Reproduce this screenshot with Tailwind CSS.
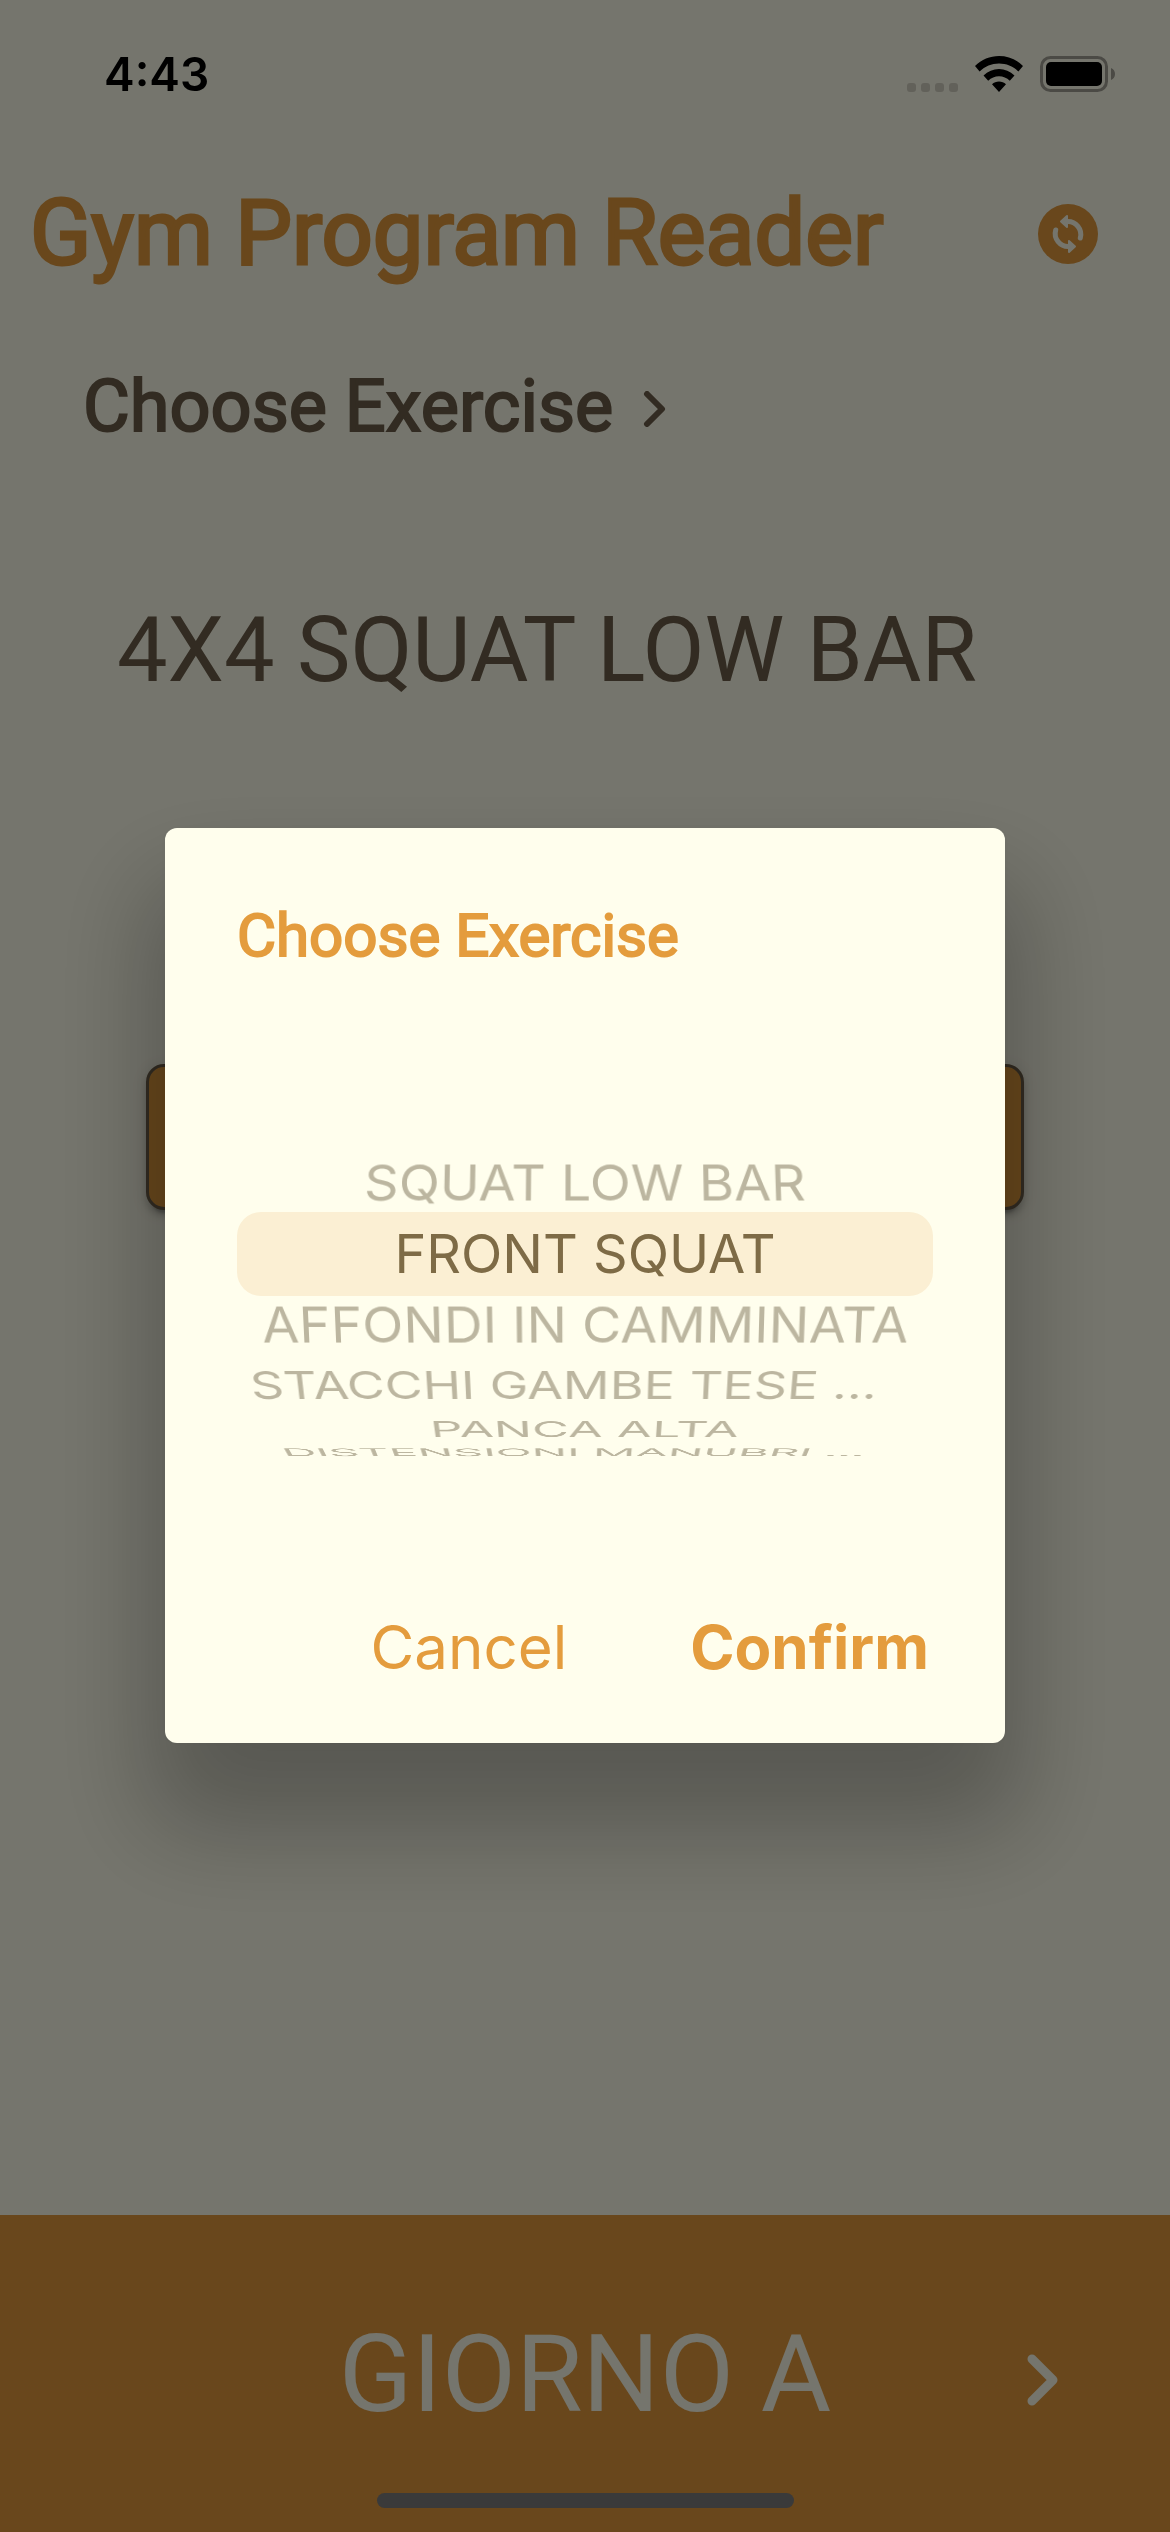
<!DOCTYPE html>
<html lang="en">
<head>
<meta charset="utf-8">
<meta name="viewport" content="width=device-width, initial-scale=1">
<title>Gym Program Reader</title>
<script src="https://cdn.jsdelivr.net/npm/@tailwindcss/browser@4"></script>
</head>
<body class="bg-[#fffeed] font-[Roboto,sans-serif] text-[#6d5f4a]">
<div class="flex min-h-screen flex-col">
  <header class="flex items-center justify-between pt-[174px] pr-[72px] pl-[30px]">
    <h1 class="text-[90px] leading-[120px] text-[#e49c3d] [-webkit-text-stroke:3px_currentColor]">Gym Program Reader</h1>
    <button type="button" aria-label="Refresh program">
      <svg class="size-[60px]" viewBox="0 0 60 60" fill="none">
        <circle cx="30" cy="30" r="30" fill="#e49c3d"/>
        <path d="M29 17.500A13 13 0 0 1 42.300 34M31 42.500A13 13 0 0 1 17.700 26" stroke="#fffeed" stroke-width="5" stroke-linecap="round"/>
        <path d="M29 12v11l-6-5.500zM31 37v11l6-5.500z" fill="#fffeed" stroke="#fffeed" stroke-width="2" stroke-linejoin="round"/>
      </svg>
    </button>
  </header>

  <main class="flex grow flex-col">
    <button type="button" class="mt-[62px] ml-[83px] flex items-center gap-[30px] self-start text-[72px] leading-[102px] [-webkit-text-stroke:2px_currentColor]">
      Choose Exercise
      <svg class="mt-[4px] h-[36px] w-[24px]" viewBox="0 0 24 36" fill="none" stroke="currentColor" stroke-width="6" stroke-linecap="round" stroke-linejoin="round"><path d="M4 3l15 15L4 33"/></svg>
    </button>
    <h2 class="mt-[133px] pr-[76px] text-center text-[90px] leading-[120px]">4X4 SQUAT LOW BAR</h2>
    <button type="button" aria-label="Start exercise" class="mx-[146px] mt-[353px] h-[146px] rounded-[18px] border-[3px] border-[#6d5f4a] bg-[#e49c3d] shadow-[0_9px_3px_-6px_rgb(0_0_0/0.2),0_6px_6px_rgb(0_0_0/0.14),0_3px_15px_rgb(0_0_0/0.12)]"></button>
  </main>

  <footer class="grid h-[317px] grid-cols-[1fr_auto_1fr] items-center bg-[#e49c3d] text-[#fffeed]">
    <h2 class="col-start-2 text-[108px] leading-[126px]">GIORNO A</h2>
    <button type="button" aria-label="Next day" class="mt-[12px] mr-[110px] justify-self-end">
      <svg class="h-[54px] w-[34px]" viewBox="0 0 34 54" fill="none" stroke="currentColor" stroke-width="9" stroke-linecap="round" stroke-linejoin="round"><path d="M6 6l21 21L6 48"/></svg>
    </button>
  </footer>
</div>

<div class="fixed inset-0 flex items-center justify-center bg-black/54 px-[165px] pt-[39px]">
  <section role="dialog" aria-modal="true" aria-labelledby="dialog-title" class="w-full rounded-[12px] bg-[#fffeed] pt-[72px] shadow-[0_69px_100px_18px_rgb(0_0_0/0.25),0_0_12px_rgb(0_0_0/0.04)]">
    <h2 id="dialog-title" class="px-[72px] text-[60px] leading-[72px] text-[#e49c3d] [-webkit-text-stroke:2px_currentColor]">Choose Exercise</h2>

    <fieldset aria-labelledby="dialog-title" class="mx-[72px] grid h-[564px] items-center font-[Inter,sans-serif] perspective-[2200px]">
      <div class="h-[84px] rounded-[24px] bg-[#fbefd3] [grid-area:1/1]"></div>
      <div class="grid -translate-z-[209px] place-items-center text-[54px] leading-[60px] whitespace-nowrap text-[#bcb6a0] [grid-area:1/1] transform-3d">
        <label class="[grid-area:1/1] [transform:rotateX(20deg)_translateZ(209px)]"><input class="sr-only" type="radio" name="exercise">SQUAT LOW BAR</label>
        <label class="text-[#7e6b46] [grid-area:1/1] [transform:translateZ(209px)]"><input class="sr-only" type="radio" name="exercise" checked>FRONT SQUAT</label>
        <label class="[grid-area:1/1] [transform:rotateX(-20deg)_translateZ(209px)]"><input class="sr-only" type="radio" name="exercise">AFFONDI IN CAMMINATA</label>
        <label class="pr-[42px] text-[53px] [grid-area:1/1] [transform:rotateX(-40deg)_translateZ(209px)]"><input class="sr-only" type="radio" name="exercise">STACCHI GAMBE TESE …</label>
        <label class="text-[53px] [grid-area:1/1] [transform:rotateX(-60deg)_translateZ(212px)]"><input class="sr-only" type="radio" name="exercise">PANCA ALTA</label>
        <label class="pr-[24px] text-[50px] [grid-area:1/1] [transform:rotateX(-72deg)_translateZ(222px)]"><input class="sr-only" type="radio" name="exercise">DISTENSIONI MANUBRI …</label>
      </div>
    </fieldset>

    <div class="flex justify-end gap-[27px] pt-[39px] pr-[28px] pb-[24px] font-[Inter,sans-serif] text-[60px] leading-[144px] text-[#e49c3d]">
      <button type="button" class="px-[48px]">Cancel</button>
      <button type="button" class="px-[48px] font-bold">Confirm</button>
    </div>
  </section>
</div>

<div class="fixed inset-x-0 top-0 flex h-[147px] items-center justify-between pr-[55px] pl-[104px] font-[Inter,sans-serif] text-black">
  <time class="text-[46px] leading-[60px] font-semibold">4:43</time>
  <div class="flex items-center gap-[17px]">
    <svg class="h-[36px] w-[51px]" viewBox="0 0 51 36" fill="#62615a"><rect y="27" width="9" height="9" rx="3"/><rect x="14" y="27" width="9" height="9" rx="3"/><rect x="28" y="27" width="9" height="9" rx="3"/><rect x="42" y="27" width="9" height="9" rx="3"/></svg>
    <svg class="h-[36px] w-[48px]" viewBox="0 0 48 36"><path d="M24 0C15 0 6.500 3.400 0 10l4.600 5.500C10 10.500 16.500 7.600 24 7.600s14 2.900 19.400 7.900L48 10C41.500 3.400 33 0 24 0zM24 13c-5.800 0-11.200 2.300-15.500 6.400l4.700 5.400c3-2.800 6.700-4.500 10.800-4.500s7.800 1.700 10.800 4.500l4.700-5.400C35.200 15.300 29.800 13 24 13zM24 25.500c-2.700 0-5.100 1-7 2.700l7 7.800 7-7.800c-1.900-1.700-4.300-2.700-7-2.700z"/></svg>
    <svg class="h-[36px] w-[75px]" viewBox="0 0 75 36"><rect x="1.500" y="1.500" width="65" height="33" rx="9" fill="none" stroke="#4b4a45" stroke-width="3"/><rect x="6" y="6" width="56" height="24" rx="5"/><path d="M71 12c2.500 1 4 3.200 4 6s-1.500 5-4 6z" fill="#4b4a45"/></svg>
  </div>
</div>
<div class="fixed inset-x-0 bottom-[24px] flex justify-center"><div class="h-[15px] w-[417px] rounded-full bg-[#3a3a3a]"></div></div>
</body>
</html>
